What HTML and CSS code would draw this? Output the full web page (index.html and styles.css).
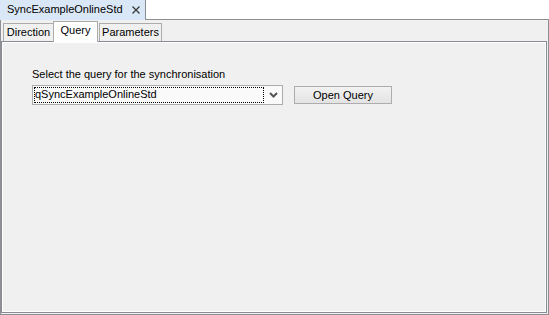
FILE: index.html
```html
<!DOCTYPE html>
<html lang="en">
<head>
  <meta charset="UTF-8" />
  <title>SyncExampleOnlineStd</title>
  <link rel="stylesheet" href="styles.css">
</head>
<body>
  <div class="window">
    <div class="editor-tabs">
      <div class="editor-tab">
        <span>SyncExampleOnlineStd</span>
        <svg class="close" width="8" height="8" viewBox="0 0 8 8">
          <path d="M0.5 0.5 L7.5 7.5 M7.5 0.5 L0.5 7.5" stroke="#3c3c3c" stroke-width="1.3" fill="none"/>
        </svg>
      </div>
      <div class="editor-fill"></div>
    </div>
    <div class="panel">
      <div class="tabs">
        <div class="tab tab-direction">Direction</div>
        <div class="tab tab-query active">Query</div>
        <div class="tab tab-params">Parameters</div>
      </div>
      <div class="content">
        <div class="label">Select the query for the synchronisation</div>
        <div class="row">
          <div class="combo">
            <div class="combo-value">qSyncExampleOnlineStd</div>
            <div class="combo-arrow">
              <svg width="9" height="6" viewBox="0 0 9 6">
                <path d="M1 1 L4.5 4.5 L8 1" stroke="#555" stroke-width="2" fill="none"/>
              </svg>
            </div>
          </div>
          <button class="btn">Open Query</button>
        </div>
      </div>
    </div>
  </div>
</body>
</html>
```

FILE: styles.css
```css
* {
  box-sizing: border-box;
}

body {
  margin: 0;
  background: #fff;
}

.window {
  width: 549px;
  height: 315px;
  display: flex;
  flex-direction: column;
  font-family: "Liberation Sans", Arial, sans-serif;
  font-size: 11px;
  color: #000;
}

/* editor tab strip */
.editor-tabs {
  display: flex;
  height: 20px;
}

.editor-tab {
  width: 146px;
  height: 20px;
  background: #dae7f6;
  border-right: 1px solid #8e8f94;
  display: flex;
  align-items: center;
  padding: 0 5px 1px 7px;
  line-height: 19px;
}

.editor-tab .close {
  margin-left: auto;
}

.editor-fill {
  flex: 1;
  border-bottom: 1px solid #8e8f94;
}

/* panel with the inner tabbed pane */
.panel {
  flex: 1;
  display: flex;
  flex-direction: column;
  background: #f0f0f0;
  border: 1px solid #8e8f94;
  border-top: none;
  padding: 0 1px 1px 0;
}

.tabs {
  display: flex;
  align-items: flex-end;
  height: 21px;
  padding-left: 2px;
}

.tab {
  height: 18px;
  line-height: 17px;
  text-align: center;
  background: #f0f0f0;
  border: 1px solid #acacac;
  border-bottom: none;
}

.tab-direction {
  width: 51px;
}

.tab-query {
  width: 45px;
  margin-left: -1px;
}

.tab-params {
  width: 63px;
  margin-left: 1px;
}

.tab.active {
  position: relative;
  height: 21px;
  margin-bottom: -1px;
  line-height: 16px;
  background: #fff;
}

.content {
  flex: 1;
  background: #f0f0f0;
  border: 1px solid #898c95;
  box-shadow: inset 0 0 0 1px #fff;
  padding: 26px 30px;
}

.label {
  line-height: 13px;
  margin-bottom: 4px;
}

.row {
  display: flex;
  align-items: center;
}

.combo {
  width: 251px;
  height: 20px;
  display: flex;
  background: #fafafa;
  border: 1px solid #acacac;
  padding: 1px 0 1px 1px;
}

.combo-value {
  width: 230px;
  height: 16px;
  border: 1px dotted #000;
  line-height: 13px;
  padding-left: 0;
}

.combo-arrow {
  flex: 1;
  display: flex;
  align-items: center;
  justify-content: center;
  padding-bottom: 1px;
}

.btn {
  margin-left: 11px;
  width: 98px;
  height: 18px;
  padding: 0;
  font: inherit;
  line-height: 16px;
  color: #000;
  border: 1px solid #adadad;
  background: linear-gradient(#f2f2f2, #e3e3e3);
}
```
